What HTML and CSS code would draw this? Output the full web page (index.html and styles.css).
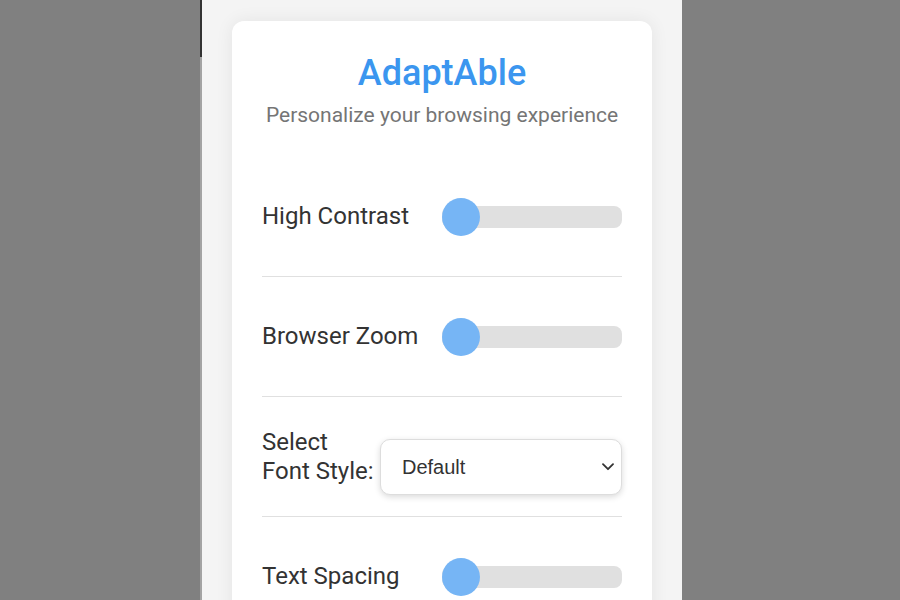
FILE: index.html
```html
<!DOCTYPE html>
<html lang="en">
<head>
<meta charset="utf-8">
<title>AdaptAble</title>
<link rel="stylesheet" href="styles.css">
</head>
<body>
<div class="gutter"></div>
<div class="strip"><div class="strip-top"></div><div class="strip-bottom"></div></div>
<main class="panel">
  <section class="card">
    <header class="head">
      <h1 class="title">AdaptAble</h1>
      <p class="subtitle">Personalize your browsing experience</p>
    </header>
    <div class="row">
      <label class="label" for="contrast">High Contrast</label>
      <input class="slider" id="contrast" type="range" min="0" max="100" value="0">
    </div>
    <div class="row">
      <label class="label" for="zoom">Browser Zoom</label>
      <input class="slider" id="zoom" type="range" min="0" max="100" value="0">
    </div>
    <div class="row row-select">
      <label class="label label-select" for="font">Select Font Style:</label>
      <div class="select-wrap">
        <select class="select" id="font">
          <option>Default</option>
          <option>Serif</option>
          <option>Monospace</option>
        </select>
        <svg class="chevron" width="12" height="8" viewBox="0 0 12 8" aria-hidden="true">
          <path d="M1 1.2 L6 6.2 L11 1.2" fill="none" stroke="#333333" stroke-width="1.8" stroke-linecap="round" stroke-linejoin="round"/>
        </svg>
      </div>
    </div>
    <div class="row">
      <label class="label" for="spacing">Text Spacing</label>
      <input class="slider" id="spacing" type="range" min="0" max="100" value="0">
    </div>
  </section>
</main>
<div class="gutter-right"></div>
</body>
</html>
```
FILE: styles.css
```css
html, body {
  margin: 0;
  height: 100%;
}
body {
  background: #808080;
  display: flex;
  overflow: hidden;
  font-family: Roboto, "Liberation Sans", sans-serif;
}
.gutter {
  width: 200px;
  flex: none;
}
.strip {
  width: 2px;
  flex: none;
  display: flex;
  flex-direction: column;
}
.strip-top {
  height: 57px;
  background: #333333;
}
.strip-bottom {
  flex: 1;
  background: #a3a3a3;
}
.panel {
  width: 480px;
  flex: none;
  box-sizing: border-box;
  background: #f4f4f4;
  padding: 21px 30px;
}
.gutter-right {
  flex: 1;
}
.card {
  background: #ffffff;
  border-radius: 12px;
  padding: 32px 30px 30px;
  box-shadow: 0 0 18px rgba(0, 0, 0, 0.07);
}
.head {
  text-align: center;
  margin-bottom: 28px;
}
.title {
  margin: 0;
  font-size: 36px;
  font-weight: 500;
  line-height: 40px;
  color: #3b96ef;
}
.subtitle {
  margin: 8px 0 0;
  font-size: 21px;
  line-height: 28px;
  color: #757575;
}
.row {
  display: flex;
  align-items: center;
  justify-content: space-between;
  height: 119px;
  border-bottom: 1px solid #e0e0e0;
}
.row:last-child {
  border-bottom: none;
}
.label {
  font-size: 24px;
  color: #333333;
  line-height: 29px;
}
.label-select {
  width: 116px;
}
.slider {
  -webkit-appearance: none;
  appearance: none;
  width: 180px;
  height: 22px;
  margin: 0;
  background: #e0e0e0;
  border-radius: 8px;
  outline: none;
}
.slider::-webkit-slider-thumb {
  -webkit-appearance: none;
  appearance: none;
  width: 38px;
  height: 38px;
  border-radius: 50%;
  background: #76b5f5;
  border: none;
}
.select-wrap {
  position: relative;
  width: 242px;
  height: 56px;
  margin-top: 21px;
}
.select {
  -webkit-appearance: none;
  appearance: none;
  width: 100%;
  height: 100%;
  box-sizing: border-box;
  padding: 0 34px 0 21px;
  font-family: "Liberation Sans", Arial, sans-serif;
  font-size: 20px;
  color: #333333;
  background: #ffffff;
  border: 1px solid #dddddd;
  border-radius: 10px;
  box-shadow: 0 2px 6px rgba(0, 0, 0, 0.15);
  outline: none;
}
.chevron {
  position: absolute;
  right: 8px;
  top: 24px;
  pointer-events: none;
}
```
